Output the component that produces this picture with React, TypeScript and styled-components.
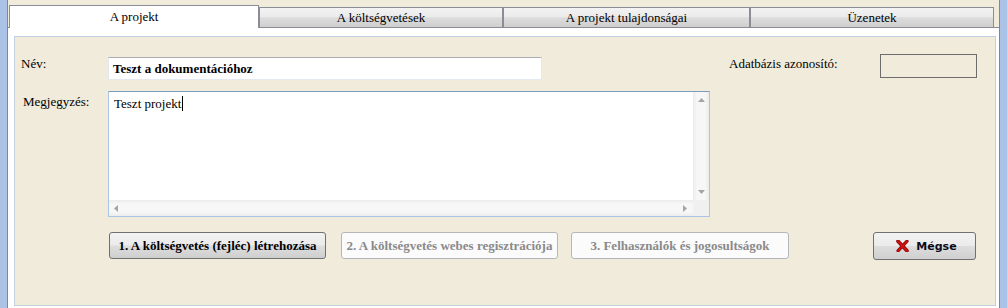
import React from 'react';
import styled, { createGlobalStyle } from 'styled-components';

const BEIGE = '#f1ebdb';
const TAB_BORDER = '#8a8d94';

const GlobalStyle = createGlobalStyle`
  html, body {
    margin: 0;
    padding: 0;
  }
  body {
    width: 1007px;
    height: 308px;
    overflow: hidden;
    background: ${BEIGE};
    font-family: 'Liberation Serif', 'Times New Roman', serif;
    font-size: 13px;
    color: #000;
  }
`;

const Window = styled.div`
  display: flex;
  width: 1007px;
  height: 308px;
  box-sizing: border-box;
  border-left: 7px solid #a9c2e5;
  border-right: 7px solid #a9c2e5;
`;

const Frame = styled.div`
  flex: 1;
  display: flex;
  flex-direction: column;
  border-left: 1px solid #7d8896;
  border-right: 1px solid #7d8896;
  background: ${BEIGE};
`;

const TabStrip = styled.div`
  display: flex;
  align-items: flex-end;
  height: 22px;
  margin-top: 5px;
  padding-left: 1px;
`;

const Tab = styled.div<{ $active?: boolean; $width: number }>`
  position: relative;
  z-index: ${p => (p.$active ? 1 : 0)};
  box-sizing: border-box;
  width: ${p => p.$width}px;
  height: ${p => (p.$active ? 23 : 20)}px;
  margin-bottom: ${p => (p.$active ? -1 : 0)}px;
  border: 1px solid ${TAB_BORDER};
  border-bottom: none;
  background: ${p =>
    p.$active
      ? '#fff'
      : 'linear-gradient(#f3f3f3 0%, #ebebeb 45%, #dcdcdc 52%, #cfcfcf 100%)'};
  text-align: center;
  line-height: ${p => (p.$active ? 21 : 19)}px;
  white-space: nowrap;
`;

const TabBody = styled.div`
  flex: 1;
  display: flex;
  flex-direction: column;
  background: #fff;
  border-top: 1px solid ${TAB_BORDER};
  padding: 8px 3px 2px 6px;
`;

const Panel = styled.div`
  flex: 1;
  display: flex;
  flex-direction: column;
  border: 1px solid #c3d0e0;
  background: ${BEIGE};
  padding: 17px 18px 0 6px;
`;

const TopRow = styled.div`
  display: flex;
  justify-content: space-between;
  align-items: flex-start;
`;

const FieldGrid = styled.div`
  display: grid;
  grid-template-columns: 87px auto;
  row-gap: 11px;
`;

const Label = styled.div<{ $top: number; $indent?: number }>`
  margin-top: ${p => p.$top}px;
  padding-left: ${p => p.$indent ?? 0}px;
  line-height: 15px;
  white-space: nowrap;
`;

const NameInput = styled.div`
  box-sizing: border-box;
  width: 434px;
  height: 23px;
  margin-top: 3px;
  padding-left: 4px;
  background: #fff;
  border: 1px solid #e3e9ef;
  border-top-color: #abadb3;
  font-weight: bold;
  line-height: 21px;
`;

const NoteBox = styled.div`
  box-sizing: border-box;
  width: 602px;
  height: 126px;
  display: grid;
  grid-template-columns: 1fr 16px;
  grid-template-rows: 1fr 16px;
  background: #fff;
  border: 1px solid #abc6e3;
  border-top-color: #7f9db9;
`;

const NoteText = styled.div`
  padding: 4px 0 0 5px;
  line-height: 15px;
`;

const Caret = styled.span`
  display: inline-block;
  width: 1px;
  height: 15px;
  margin-left: 1px;
  background: #000;
  vertical-align: -3px;
`;

const ScrollBar = styled.div<{ $vertical?: boolean }>`
  display: flex;
  flex-direction: ${p => (p.$vertical ? 'column' : 'row')};
  justify-content: space-between;
  align-items: center;
  padding: ${p => (p.$vertical ? '6px 0 6px' : '0 6px 0 5px')};
  background: ${p =>
    p.$vertical
      ? 'linear-gradient(to right, #ebebeb, #f7f7f7 25%, #f7f7f7 75%, #ececec)'
      : 'linear-gradient(#ebebeb, #f7f7f7 25%, #f7f7f7 75%, #ececec)'};
`;

const ScrollCorner = styled.div`
  background: #f0f0f0;
`;

const RightGroup = styled.div`
  display: flex;
  align-items: flex-start;
`;

const IdLabel = styled(Label)`
  width: 151px;
`;

const IdBox = styled.div`
  box-sizing: border-box;
  width: 97px;
  height: 24px;
  border: 1px solid #6d6d6d;
`;

const ButtonRow = styled.div`
  display: flex;
  align-items: flex-start;
  margin-top: 15px;
  padding-left: 88px;
`;

const ActionButton = styled.button<{ $width: number; $gap?: number }>`
  box-sizing: border-box;
  width: ${p => p.$width}px;
  height: 27px;
  margin-left: ${p => p.$gap ?? 0}px;
  padding: 0;
  border: 1px solid #707070;
  border-radius: 3px;
  background: linear-gradient(#f2f2f2 0%, #ebebeb 48%, #dddddd 52%, #cfcfcf 100%);
  font-family: 'Liberation Serif', 'Times New Roman', serif;
  font-size: 13px;
  font-weight: bold;
  color: #000;
  white-space: nowrap;

  &:disabled {
    background: #fbfbfb;
    border-color: #b4b7ba;
    color: #8a8a8a;
  }
`;

const CancelButton = styled.button`
  box-sizing: border-box;
  display: flex;
  align-items: center;
  justify-content: center;
  gap: 7px;
  width: 103px;
  height: 28px;
  margin-left: auto;
  margin-right: 1px;
  padding: 0 0 0 4px;
  border: 1px solid #707070;
  border-radius: 3px;
  background: linear-gradient(#f2f2f2 0%, #ebebeb 48%, #dddddd 52%, #cfcfcf 100%);
  font-family: 'DejaVu Sans', Verdana, sans-serif;
  font-size: 11px;
  font-weight: bold;
  color: #0c0c1c;
`;

const Arrow = ({ dir }: { dir: 'up' | 'down' | 'left' | 'right' }) => {
  const pts = {
    up: '0,4 7,4 3.5,0',
    down: '0,0 7,0 3.5,4',
    left: '4,0 4,7 0,3.5',
    right: '0,0 0,7 4,3.5',
  }[dir];
  const vertical = dir === 'up' || dir === 'down';
  return (
    <svg width={vertical ? 7 : 4} height={vertical ? 4 : 7}>
      <polygon points={pts} fill="#a4a4a4" />
    </svg>
  );
};

const CrossIcon = () => (
  <svg width="13" height="12" viewBox="0 0 13 12">
    <path d="M2 1.2 L11 10.8" stroke="#8a0000" strokeWidth="3.6" strokeLinecap="round" />
    <path d="M11 1.2 L2 10.8" stroke="#8a0000" strokeWidth="3.2" strokeLinecap="round" />
    <path d="M2 1.2 L11 10.8" stroke="#d41010" strokeWidth="2" strokeLinecap="round" />
    <path d="M11 1.2 L2 10.8" stroke="#d41010" strokeWidth="1.7" strokeLinecap="round" />
  </svg>
);

const tabs = [
  { title: 'A projekt', width: 250, active: true },
  { title: 'A költségvetések', width: 244 },
  { title: 'A projekt tulajdonságai', width: 247 },
  { title: 'Üzenetek', width: 244 },
];

const App = () => (
  <>
    <GlobalStyle />
    <Window>
      <Frame>
        <TabStrip>
          {tabs.map(tab => (
            <Tab key={tab.title} $active={tab.active} $width={tab.width}>
              {tab.title}
            </Tab>
          ))}
        </TabStrip>

        <TabBody>
          <Panel>
            <TopRow>
              <FieldGrid>
                <Label $top={2}>Név:</Label>
                <NameInput>Teszt a dokumentációhoz</NameInput>

                <Label $top={3} $indent={2}>
                  Megjegyzés:
                </Label>
                <NoteBox>
                  <NoteText>
                    Teszt projekt
                    <Caret />
                  </NoteText>
                  <ScrollBar $vertical>
                    <Arrow dir="up" />
                    <Arrow dir="down" />
                  </ScrollBar>
                  <ScrollBar>
                    <Arrow dir="left" />
                    <Arrow dir="right" />
                  </ScrollBar>
                  <ScrollCorner />
                </NoteBox>
              </FieldGrid>

              <RightGroup>
                <IdLabel $top={2}>Adatbázis azonosító:</IdLabel>
                <IdBox />
              </RightGroup>
            </TopRow>

            <ButtonRow>
              <ActionButton $width={217}>1. A költségvetés (fejléc) létrehozása</ActionButton>
              <ActionButton $width={217} $gap={15} disabled>
                2. A költségvetés webes regisztrációja
              </ActionButton>
              <ActionButton $width={218} $gap={13} disabled>
                3. Felhasználók és jogosultságok
              </ActionButton>
              <CancelButton>
                <CrossIcon />
                Mégse
              </CancelButton>
            </ButtonRow>
          </Panel>
        </TabBody>
      </Frame>
    </Window>
  </>
);

export default App;
